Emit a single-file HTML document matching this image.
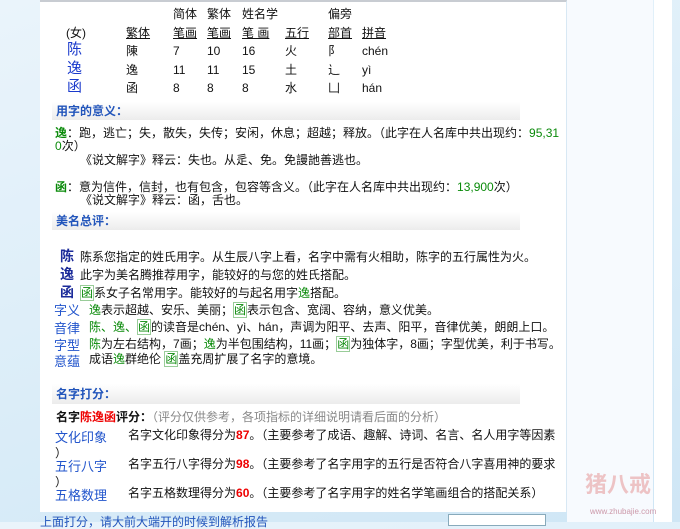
<!DOCTYPE html>
<html><head><meta charset="utf-8"><style>
body{margin:0;width:680px;height:522px;overflow:hidden;position:relative;background:linear-gradient(160deg,#eaf4fb,#d9ecf8 60%,#cfe6f5);font-family:"Liberation Sans","Noto Sans CJK SC","WenQuanYi Zen Hei",sans-serif;font-size:12px;color:#111}
.a{position:absolute;white-space:nowrap;line-height:14px}
#panel{position:absolute;left:40px;top:0;width:526px;height:510px;background:#fff;border-top:2px solid #c8ccd2;border-right:1px solid #d8e8f4}
#right{position:absolute;left:567px;top:0;width:86px;height:522px;background:#f7fafe}
#right2{position:absolute;left:654px;top:0;width:18px;height:522px;background:#fff}
.bar{position:absolute;left:52px;width:464px;height:18px;background:linear-gradient(#fff,#ececec);color:#2255bb;font-weight:bold;font-size:12px;line-height:18px;padding-left:4px}
.u{text-decoration:underline}
.bl{color:#1a3acc;font-size:15px;line-height:18px}
.g{color:#0a8a0a}
.gb{color:#0a8a0a;border:1px solid #9c9;padding:0}
.lb{color:#2255cc;font-size:13px}
.r{color:#e00;font-weight:bold}
</style></head><body>
<div id="right"></div><div id="right2"></div>
<div id="panel"></div>
<div class="a" style="left:173px;top:7px">简体</div>
<div class="a" style="left:207px;top:7px">繁体</div>
<div class="a" style="left:242px;top:7px">姓名学</div>
<div class="a" style="left:328px;top:7px">偏旁</div>
<div class="a" style="left:66px;top:26px">(女)</div>
<div class="a u" style="left:126px;top:26px">繁体</div>
<div class="a u" style="left:173px;top:26px">笔画</div>
<div class="a u" style="left:207px;top:26px">笔画</div>
<div class="a u" style="left:242px;top:26px">笔 画</div>
<div class="a u" style="left:285px;top:26px">五行</div>
<div class="a u" style="left:328px;top:26px">部首</div>
<div class="a u" style="left:362px;top:26px">拼音</div>
<div class="a bl" style="left:67px;top:41px">陈</div>
<div class="a" style="left:126px;top:44px">陳</div><div class="a" style="left:173px;top:44px">7</div><div class="a" style="left:207px;top:44px">10</div><div class="a" style="left:242px;top:44px">16</div><div class="a" style="left:285px;top:44px">火</div><div class="a" style="left:328px;top:44px">阝</div><div class="a" style="left:362px;top:44px">chén</div>
<div class="a bl" style="left:67px;top:60px">逸</div>
<div class="a" style="left:126px;top:63px">逸</div><div class="a" style="left:173px;top:63px">11</div><div class="a" style="left:207px;top:63px">11</div><div class="a" style="left:242px;top:63px">15</div><div class="a" style="left:285px;top:63px">土</div><div class="a" style="left:328px;top:63px">辶</div><div class="a" style="left:362px;top:63px">yì</div>
<div class="a bl" style="left:67px;top:78px">函</div>
<div class="a" style="left:126px;top:81px">函</div><div class="a" style="left:173px;top:81px">8</div><div class="a" style="left:207px;top:81px">8</div><div class="a" style="left:242px;top:81px">8</div><div class="a" style="left:285px;top:81px">水</div><div class="a" style="left:328px;top:81px">凵</div><div class="a" style="left:362px;top:81px">hán</div>

<div class="bar" style="top:102px">用字的意义：</div>
<div class="a" style="left:55px;top:126px"><b class="g">逸</b>：跑，逃亡；失，散失，失传；安闲，休息；超越；释放。（此字在人名库中共出现约：<span class="g">95,31</span></div>
<div class="a" style="left:55px;top:139px"><span class="g">0</span>次）</div>
<div class="a" style="left:80px;top:153px">《说文解字》释云：失也。从辵、免。免謾訑善逃也。</div>
<div class="a" style="left:55px;top:180px"><b class="g">函</b>：意为信件，信封，也有包含，包容等含义。（此字在人名库中共出现约：<span class="g">13,900</span>次）</div>
<div class="a" style="left:80px;top:193px">《说文解字》释云：函，舌也。</div>

<div class="bar" style="top:212px">美名总评：</div>
<div class="a" style="left:60px;top:249px"><b style="color:#1a2a99;font-size:14px">陈</b></div><div class="a" style="left:80px;top:250px">陈系您指定的姓氏用字。从生辰八字上看，名字中需有火相助，陈字的五行属性为火。</div>
<div class="a" style="left:60px;top:267px"><b style="color:#1a2a99;font-size:14px">逸</b></div><div class="a" style="left:80px;top:268px">此字为美名腾推荐用字，能较好的与您的姓氏搭配。</div>
<div class="a" style="left:60px;top:285px"><b style="color:#1a2a99;font-size:14px">函</b></div><div class="a" style="left:80px;top:286px"><span class="gb">函</span>系女子名常用字。能较好的与起名用字<span class="g">逸</span>搭配。</div>
<div class="a lb" style="left:54px;top:304px">字义</div><div class="a" style="left:89px;top:303px"><span class="g">逸</span>表示超越、安乐、美丽；<span class="gb">函</span>表示包含、宽阔、容纳，意义优美。</div>
<div class="a lb" style="left:54px;top:322px">音律</div><div class="a" style="left:89px;top:320px"><span class="g">陈、逸、</span><span class="gb">函</span>的读音是chén、yì、hán，声调为阳平、去声、阳平，音律优美，朗朗上口。</div>
<div class="a lb" style="left:54px;top:339px">字型</div><div class="a" style="left:89px;top:337px"><span class="g">陈</span>为左右结构，7画；<span class="g">逸</span>为半包围结构，11画；<span class="gb">函</span>为独体字，8画；字型优美，利于书写。</div>
<div class="a lb" style="left:54px;top:355px">意蕴</div><div class="a" style="left:89px;top:352px">成语<span class="g">逸</span>群绝伦 <span class="gb">函</span>盖充周扩展了名字的意境。</div>

<div class="bar" style="top:384px;height:20px;line-height:20px">名字打分：</div>
<div class="a" style="left:56px;top:410px;font-weight:bold">名字<span style="color:#e00">陈逸函</span>评分：<span style="font-weight:normal;color:#888">（评分仅供参考，各项指标的详细说明请看后面的分析）</span></div>
<div class="a lb" style="left:55px;top:431px">文化印象</div><div class="a" style="left:55px;top:446px">）</div>
<div class="a" style="left:128px;top:428px">名字文化印象得分为<span class="r">87</span>。（主要参考了成语、趣解、诗词、名言、名人用字等因素</div>
<div class="a lb" style="left:55px;top:460px">五行八字</div><div class="a" style="left:55px;top:475px">）</div>
<div class="a" style="left:128px;top:457px">名字五行八字得分为<span class="r">98</span>。（主要参考了名字用字的五行是否符合八字喜用神的要求</div>
<div class="a lb" style="left:55px;top:489px">五格数理</div>
<div class="a" style="left:128px;top:486px">名字五格数理得分为<span class="r">60</span>。（主要参考了名字用字的姓名学笔画组合的搭配关系）</div>
<div class="a" style="left:40px;top:515px;color:#2255bb">上面打分，请大前大端开的时候到解析报告</div>
<div style="position:absolute;left:448px;top:514px;width:96px;height:10px;border:1px solid #8ab;background:#fff"></div>
<div class="a" style="left:585px;top:478px;color:#e8a0a0;font-size:22px;font-weight:bold;opacity:.6">猪八戒</div>
<div class="a" style="left:590px;top:505px;color:#c9a;font-size:8px">www.zhubajie.com</div>
</body></html>
